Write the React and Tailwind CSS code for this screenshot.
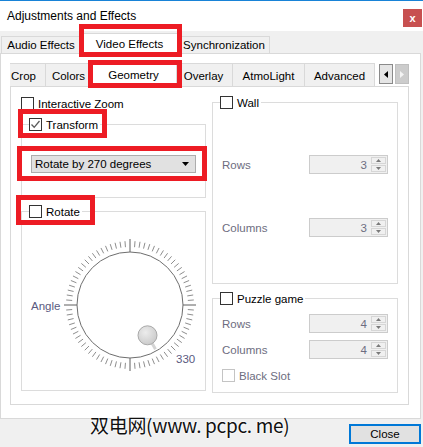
import React from 'react';

const Check = ({ checked, disabled }) => (
  <span
    className={
      disabled
        ? 'w-[13px] h-[13px] border border-[#c4c4c4] bg-white shrink-0'
        : 'w-[13px] h-[13px] border border-[#333333] bg-white shrink-0 flex items-center justify-center'
    }
  >
    {checked && (
      <svg width="11" height="11" viewBox="0 0 11 11">
        <path d="M1.5 5.5 L4.2 8.3 L9.5 2" stroke="#5a5a5a" strokeWidth="1.3" fill="none" />
      </svg>
    )}
  </span>
);

const Spin = ({ value }) => (
  <div className="w-[79px] h-[19px] border border-[#cccccc] bg-[#f0f0f0] flex">
    <div className="flex-1 flex items-center justify-end pr-[4px] text-[#6d6d80]">{value}</div>
    <div className="w-[16px] flex flex-col gap-[1px] py-[1px] pr-[1px]">
      <div className="flex-1 border border-[#d6d6d6] flex items-center justify-center">
        <svg width="5" height="3" viewBox="0 0 5 3"><path d="M0 3 L2.5 0 L5 3 Z" fill="#7a7a7a" /></svg>
      </div>
      <div className="flex-1 border border-[#d6d6d6] flex items-center justify-center">
        <svg width="5" height="3" viewBox="0 0 5 3"><path d="M0 0 L2.5 3 L5 0 Z" fill="#7a7a7a" /></svg>
      </div>
    </div>
  </div>
);

const Dial = () => {
  const ticks = [];
  for (let i = 0; i < 80; i++) {
    const a = (i * 4.5 * Math.PI) / 180;
    const major = i % 20 === 0;
    const r1 = major ? 53 : 58;
    const r2 = major ? 66 : 64;
    ticks.push(
      <line
        key={i}
        x1={66 + r1 * Math.sin(a)}
        y1={66 - r1 * Math.cos(a)}
        x2={66 + r2 * Math.sin(a)}
        y2={66 - r2 * Math.cos(a)}
        stroke={major ? '#5e5e5e' : '#8e8e8e'}
        strokeWidth="1"
      />
    );
  }
  // value 330: 30 degrees right of bottom
  const k = (30 * Math.PI) / 180;
  const kx = 66 + 35 * Math.sin(k);
  const ky = 66 + 35 * Math.cos(k);
  const tx = 66 + 51 * Math.sin(k);
  const ty = 66 + 51 * Math.cos(k);
  return (
    <svg width="132" height="132" viewBox="0 0 132 132" className="shrink-0">
      <defs>
        <radialGradient id="knob" cx="40%" cy="35%" r="70%">
          <stop offset="0%" stopColor="#ececec" />
          <stop offset="100%" stopColor="#c9c9c9" />
        </radialGradient>
      </defs>
      {ticks}
      <circle cx="66" cy="66" r="53" fill="white" stroke="#6e6e6e" strokeWidth="1" />
      <line x1={kx} y1={ky} x2={tx} y2={ty} stroke="#d4d4d4" strokeWidth="3" />
      <circle cx={kx} cy={ky} r="9.5" fill="url(#knob)" stroke="#a9a9a9" strokeWidth="1" />
      <text x="112" y="124" fontSize="11.5" fill="#5a5a80" fontFamily="Liberation Sans, Arial, sans-serif">330</text>
    </svg>
  );
};

export default function App() {
  return (
    <div className="relative w-[423px] h-[447px] bg-[#f0f0f0] overflow-hidden font-['Liberation_Sans',Arial,sans-serif] text-[11.5px] text-black leading-[14px]">
      {/* title bar */}
      <div className="h-[31px] bg-white border-t border-[#1883d7] flex items-start justify-between">
        <span className="ml-[7px] mt-[8px] text-[12px]">Adjustments and Effects</span>
        <div className="w-[19px] h-[18px] mt-[8px] mr-[1px] bg-[#c75050] text-white font-bold text-[11px] flex items-center justify-center">x</div>
      </div>

      {/* main tabs */}
      <div className="h-[22px] flex items-end pl-[1px]">
        <div className="w-[80px] h-[17px] border border-b-0 border-[#d9d9d9] bg-[#f0f0f0] flex items-center justify-center">Audio Effects</div>
        <div className="relative z-10 w-[101px] h-[21px] -mx-[2px] -mb-[1px] border border-b-0 border-[#d9d9d9] bg-white flex items-center justify-center pb-[1px]">Video Effects</div>
        <div className="w-[92px] h-[17px] border border-b-0 border-[#d9d9d9] bg-[#f0f0f0] flex items-center justify-center">Synchronization</div>
      </div>

      <div className="w-[421px] h-[366px] bg-white border border-[#d9d9d9] pt-[9px] pl-[9px]">
        {/* video tabs */}
        <div className="h-[23px] flex items-end">
          <div className="w-[36px] h-[23px] border-t border-r border-[#d9d9d9] bg-[#f0f0f0] flex items-center pl-[1px] pt-[2px]">Crop</div>
          <div className="w-[46px] h-[23px] border-t border-r border-[#d9d9d9] bg-[#f0f0f0] flex items-center justify-center pt-[2px]">Colors</div>
          <div className="relative z-10 w-[87px] h-[26px] -mx-[2px] -mb-[1px] border border-b-0 border-[#d9d9d9] bg-white flex items-center justify-center">Geometry</div>
          <div className="w-[58px] h-[23px] border-t border-r border-[#d9d9d9] bg-[#f0f0f0] flex items-center justify-center pt-[2px]">Overlay</div>
          <div className="w-[72px] h-[23px] border-t border-r border-[#d9d9d9] bg-[#f0f0f0] flex items-center justify-center pt-[2px]">AtmoLight</div>
          <div className="w-[70px] h-[23px] border-t border-r border-[#d9d9d9] bg-[#f0f0f0] flex items-center justify-center pt-[2px]">Advanced</div>
          <div className="self-start mt-[1px] ml-[4px] w-[14px] h-[20px] border border-[#8a8a8a] bg-[#e5e5e5] flex items-center justify-center">
            <svg width="4" height="7" viewBox="0 0 4 7"><path d="M4 0 L0 3.5 L4 7 Z" fill="#000" /></svg>
          </div>
          <div className="self-start mt-[1px] ml-[2px] w-[14px] h-[20px] border border-[#bfbfbf] bg-[#cccccc] flex items-center justify-center">
            <svg width="4" height="7" viewBox="0 0 4 7"><path d="M0 0 L4 3.5 L0 7 Z" fill="#f4f4f4" /></svg>
          </div>
        </div>

        {/* geometry pane */}
        <div className="w-[399px] h-[319px] border border-[#d9d9d9] bg-white flex gap-[6px] pl-[10px]">
          {/* left column */}
          <div className="w-[185px] flex flex-col">
            <div className="mt-[10px] h-[13px] flex items-center gap-[4px]">
              <Check />
              <span>Interactive Zoom</span>
            </div>

            <fieldset className="mt-[8px] h-[80px] min-w-0 border border-[#dcdcdc] px-[7px]">
              <legend className="h-[13px] flex items-center gap-[4px] pr-[2px]">
                <Check checked />
                <span>Transform</span>
              </legend>
              <div className="mt-[24px] ml-[2px] w-[165px] h-[18px] border border-[#adadad] bg-[#e1e1e1] flex items-center justify-between pl-[3px] pr-[6px]">
                <span>Rotate by 270 degrees</span>
                <svg width="7" height="4" viewBox="0 0 7 4"><path d="M0 0 L7 0 L3.5 4 Z" fill="#000" /></svg>
              </div>
            </fieldset>

            <fieldset className="mt-[7px] h-[186px] min-w-0 border border-[#dcdcdc] px-[7px]">
              <legend className="h-[13px] flex items-center gap-[4px] pr-[2px]">
                <Check />
                <span>Rotate</span>
              </legend>
              <div className="mt-[21px] flex items-center">
                <span className="ml-[2px] w-[33px] text-[#5a5a80] pt-[2px]">Angle</span>
                <Dial />
              </div>
            </fieldset>
          </div>

          {/* right column */}
          <div className="w-[186px] flex flex-col">
            <fieldset className="mt-[9px] h-[188px] min-w-0 border border-[#dcdcdc] px-[7px]">
              <legend className="h-[13px] flex items-center gap-[4px] pr-[2px]">
                <Check />
                <span>Wall</span>
              </legend>
              <div className="mt-[46px] pl-[2px] pr-[2px] flex items-center justify-between">
                <span className="text-[#6d6d80]">Rows</span>
                <Spin value="3" />
              </div>
              <div className="mt-[44px] pl-[2px] pr-[2px] flex items-center justify-between">
                <span className="text-[#6d6d80]">Columns</span>
                <Spin value="3" />
              </div>
            </fieldset>

            <fieldset className="mt-[8px] h-[101px] min-w-0 border border-[#dcdcdc] px-[7px]">
              <legend className="h-[13px] flex items-center gap-[4px] pr-[2px]">
                <Check />
                <span>Puzzle game</span>
              </legend>
              <div className="mt-[9px] pl-[2px] pr-[2px] flex items-center justify-between">
                <span className="text-[#6d6d80]">Rows</span>
                <Spin value="4" />
              </div>
              <div className="mt-[7px] pl-[2px] pr-[2px] flex items-center justify-between">
                <span className="text-[#6d6d80]">Columns</span>
                <Spin value="4" />
              </div>
              <div className="mt-[10px] ml-[2px] h-[13px] flex items-center gap-[4px]">
                <Check disabled />
                <span className="text-[#6d6d80]">Black Slot</span>
              </div>
            </fieldset>
          </div>
        </div>
      </div>

      {/* bottom bar */}
      <div className="flex justify-end pt-[5px] pr-[2px]">
        <div className="w-[72px] h-[20px] border-2 border-[#0078d7] bg-[#e1e1e1] flex items-center justify-center">Close</div>
      </div>

      {/* watermark */}
      <div className="absolute left-[90px] top-[413px] text-[19px] leading-[23px] text-[#111] font-['Noto_Sans_CJK_SC',sans-serif] tracking-[-0.3px] [text-shadow:0_0_2px_#fff,0_0_2px_#fff,0_0_2px_#fff]">
        双电网(www. pcpc. me)
      </div>

      {/* red annotation boxes */}
      <div className="absolute left-[79px] top-[24px] w-[103px] h-[33px] border-[5px] border-[#ed1c24] z-20" />
      <div className="absolute left-[88px] top-[60px] w-[94px] h-[28px] border-[5px] border-[#ed1c24] z-20" />
      <div className="absolute left-[18px] top-[109px] w-[89px] h-[29px] border-[5px] border-[#ed1c24] z-20" />
      <div className="absolute left-[17px] top-[146px] w-[190px] h-[35px] border-[5px] border-[#ed1c24] z-20" />
      <div className="absolute left-[16px] top-[195px] w-[79px] h-[30px] border-[5px] border-[#ed1c24] z-20" />
    </div>
  );
}
